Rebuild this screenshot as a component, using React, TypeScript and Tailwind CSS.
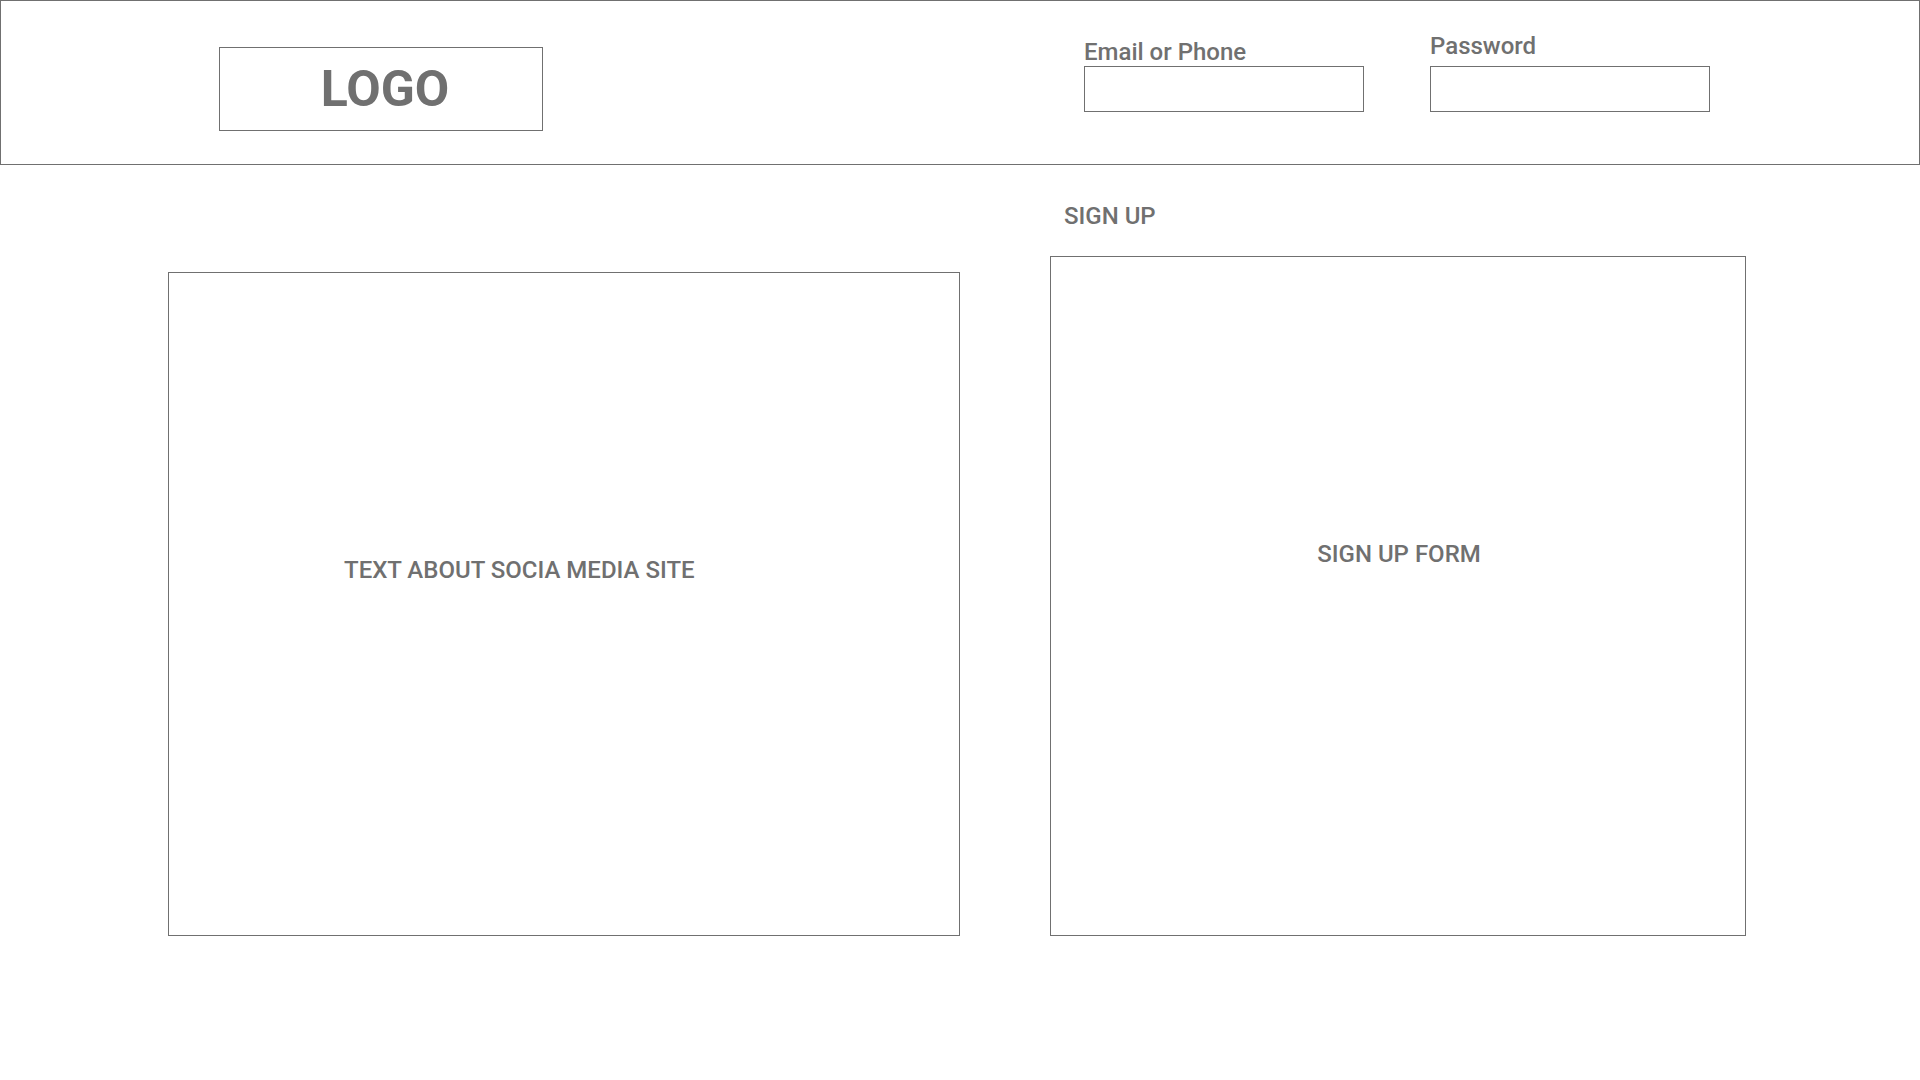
import React from "react";

export default function App() {
  return (
    <div className="w-[1920px] h-[1080px] bg-white font-['Roboto',sans-serif] text-[#707070]">
      {/* header */}
      <header className="h-[165px] border border-[#707070] flex items-start">
        <div className="ml-[218px] mt-[46px] w-[324px] h-[84px] border border-[#707070] flex items-center justify-center pl-[8px] text-[50px] font-bold leading-none">
          LOGO
        </div>
        <div className="ml-[541px] mt-[37px] flex flex-col">
          <label className="text-[24px] leading-[28px] font-medium">Email or Phone</label>
          <input className="w-[280px] h-[46px] border border-[#707070] outline-none" />
        </div>
        <div className="ml-[66px] mt-[31px] flex flex-col">
          <label className="text-[24px] leading-[28px] font-medium mb-[6px]">Password</label>
          <input type="password" className="w-[280px] h-[46px] border border-[#707070] outline-none" />
        </div>
      </header>

      {/* content */}
      <main className="flex items-start pl-[168px]">
        <section className="mt-[107px] w-[792px] h-[664px] border border-[#707070] pl-[175px] pt-[283px]">
          <p className="text-[24px] leading-[28px] font-medium">TEXT ABOUT SOCIA MEDIA SITE</p>
        </section>
        <div className="ml-[90px] mt-[37px] flex flex-col">
          <h2 className="pl-[14px] text-[24px] leading-[28px] font-medium mb-[26px]">SIGN UP</h2>
          <div className="w-[696px] h-[680px] border border-[#707070] pt-[283px] pl-[2px] text-center">
            <p className="text-[24px] leading-[28px] font-medium">SIGN UP FORM</p>
          </div>
        </div>
      </main>
    </div>
  );
}
